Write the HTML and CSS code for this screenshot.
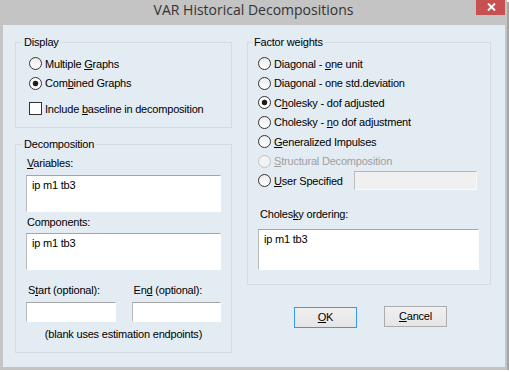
FILE: index.html
```html
<!DOCTYPE html>
<html lang="en">
<head>
   <meta charset="UTF-8">
   <title>VAR Historical Decompositions</title>
   <link rel="stylesheet" href="styles.css">
</head>
<body>
   <div class="window">
      <div class="titlebar">
         <h1 class="title">VAR Historical Decompositions</h1>
         <button class="close" aria-label="Close">
            <svg width="9" height="8" viewBox="0 0 9 8"><path d="M1 0.5 L8 7.5 M8 0.5 L1 7.5" stroke="#fff" stroke-width="1.9" fill="none"/></svg>
         </button>
      </div>

      <div class="client">
         <div class="col col-left">
            <fieldset class="group group-display">
               <legend>Display</legend>
               <label class="opt"><input type="radio" name="disp"><span>Multiple <u>G</u>raphs</span></label>
               <label class="opt"><input type="radio" name="disp" checked><span>Com<u>b</u>ined Graphs</span></label>
               <label class="opt check"><input type="checkbox"><span>Include <u>b</u>aseline in decomposition</span></label>
            </fieldset>

            <fieldset class="group group-decomp">
               <legend>Decomposition</legend>
               <div class="field-label"><u>V</u>ariables:</div>
               <textarea class="textbox tall">ip m1 tb3</textarea>
               <div class="field-label spaced">Components:</div>
               <textarea class="textbox tall">ip m1 tb3</textarea>
               <div class="dates">
                  <div>
                     <div class="field-label date-label">S<u>t</u>art (optional):</div>
                     <input class="textbox short" type="text">
                  </div>
                  <div>
                     <div class="field-label date-label">En<u>d</u> (optional):</div>
                     <input class="textbox short" type="text">
                  </div>
               </div>
               <div class="note">(blank uses estimation endpoints)</div>
            </fieldset>
         </div>

         <div class="col col-right">
            <fieldset class="group group-factor">
               <legend>Factor weights</legend>
               <label class="opt"><input type="radio" name="fw"><span>Diagonal - <u>o</u>ne unit</span></label>
               <label class="opt"><input type="radio" name="fw"><span>Dia<u>g</u>onal - one std.deviation</span></label>
               <label class="opt"><input type="radio" name="fw" checked><span>C<u>h</u>olesky - dof adjusted</span></label>
               <label class="opt"><input type="radio" name="fw"><span>Cholesky - <u>n</u>o dof adjustment</span></label>
               <label class="opt"><input type="radio" name="fw"><span><u>G</u>eneralized Impulses</span></label>
               <label class="opt disabled"><input type="radio" name="fw" disabled><span><u>S</u>tructural Decomposition</span></label>
               <div class="user-row">
                  <label class="opt user-opt"><input type="radio" name="fw"><span><u>U</u>ser Specified</span></label>
                  <input class="textbox user-box" type="text" disabled>
               </div>
               <div class="field-label order-label">Choles<u>k</u>y ordering:</div>
               <textarea class="textbox order-box">ip m1 tb3</textarea>
            </fieldset>

            <div class="actions">
               <button class="btn btn-default"><u>O</u>K</button>
               <button class="btn"><u>C</u>ancel</button>
            </div>
         </div>
      </div>
   </div>
</body>
</html>
```

FILE: styles.css
```css
body {
   margin: 0;
   background: #fff;
   font-family: "Liberation Sans", Arial, sans-serif;
   font-size: 11px;
   letter-spacing: -0.2px;
   color: #000;
}
.window {
   width: 507px;
   height: 370px;
   background: #c4c4c4;
   box-shadow: 2px 2px 0 #a4a4a4;
   display: flex;
   flex-direction: column;
}
.titlebar {
   height: 25px;
   flex: none;
   display: grid;
   grid-template-columns: 1fr auto 1fr;
}
.title {
   grid-column: 2;
   margin: 0;
   font-family: "Open Sans", sans-serif;
   font-size: 14px;
   font-weight: normal;
   letter-spacing: 0;
   line-height: 20px;
   color: #333;
}
.close {
   grid-column: 3;
   justify-self: end;
   align-self: start;
   width: 29px;
   height: 15px;
   margin-right: 2px;
   padding: 0 0 1px 2px;
   border: none;
   background: #c75050;
   display: flex;
   align-items: center;
   justify-content: center;
}
.client {
   flex: 1;
   margin: 0 2px 3px 3px;
   padding: 11px 14px 0 12px;
   background: #e3ebf3;
   display: grid;
   grid-template-columns: 217px 244px;
   column-gap: 15px;
   align-content: start;
}
.col {
   display: flex;
   flex-direction: column;
}
.col-left {
   gap: 10px;
}
.group {
   margin: 0;
   min-width: 0;
   border: 1px solid #d3dbe3;
   padding: 5px 10px 8px 10px;
}
.group legend {
   padding: 0 2px;
   line-height: 13px;
}
.group-display {
   padding-left: 13px;
}
.group-display legend {
   margin-left: -7px;
}
.group-decomp {
   padding: 6px 10px 11px 10px;
}
.group-decomp legend {
   margin-left: -4px;
}
.group-factor {
   padding: 5px 11px 14px 10px;
}
.group-factor legend {
   margin-left: -6px;
}
.opt {
   display: flex;
   align-items: center;
   height: 19.5px;
   white-space: nowrap;
}
.opt input {
   appearance: none;
   -webkit-appearance: none;
   box-sizing: border-box;
   flex: none;
   width: 13px;
   height: 13px;
   margin: 0 3px 0 0;
   border: 1px solid #333;
   border-radius: 50%;
   background: linear-gradient(#ececec, #fff);
}
.opt input:checked {
   background: radial-gradient(circle, #1e1e1e 2.4px, #fff 3.2px);
}
.opt input[type="checkbox"] {
   border-radius: 0;
   background: #fff;
}
.check {
   margin-top: 6px;
}
.opt.disabled {
   color: #a0a0a0;
}
.opt.disabled input {
   border-color: #c2c2c2;
   background: #f2f2f2;
}
.field-label {
   line-height: 13px;
   padding-left: 1px;
   margin-bottom: 5px;
}
.field-label.spaced {
   margin-top: 4px;
   margin-bottom: 4px;
}
.textbox {
   display: block;
   box-sizing: border-box;
   width: 100%;
   margin: 0;
   padding: 3px 5px;
   border: 1px solid;
   border-color: #a5a5a5 #fff #fff #b8b8b8;
   background: #fff;
   font: inherit;
   letter-spacing: inherit;
   line-height: 13px;
   resize: none;
   outline: none;
}
.tall {
   height: 37px;
}
.short {
   height: 20px;
}
.dates {
   display: grid;
   grid-template-columns: 1fr 1fr;
   column-gap: 16px;
   margin-top: 14px;
}
.date-label {
   padding-left: 2px;
}
.note {
   margin-top: 6px;
   line-height: 13px;
   text-align: center;
}
.user-row {
   display: flex;
   align-items: center;
}
.user-opt {
   width: 96px;
}
.user-box {
   width: 123px;
   height: 19px;
   background: #f0f0f0;
   border-color: #b4b4b4 #fafafa #fafafa #bdbdbd;
}
.order-label {
   margin-top: 17px;
   margin-bottom: 8px;
   padding-left: 2px;
}
.order-box {
   height: 41px;
}
.actions {
   display: flex;
   justify-content: center;
   gap: 27px;
   margin-top: 21px;
   padding-left: 3px;
}
.btn {
   width: 63px;
   height: 21px;
   padding: 0;
   border: 1px solid #acacac;
   background: linear-gradient(#f0f0f0, #e5e5e5);
   font: inherit;
   letter-spacing: inherit;
   color: #000;
}
.btn-default {
   border-color: #3399ff;
   margin-top: 1px;
}
```
